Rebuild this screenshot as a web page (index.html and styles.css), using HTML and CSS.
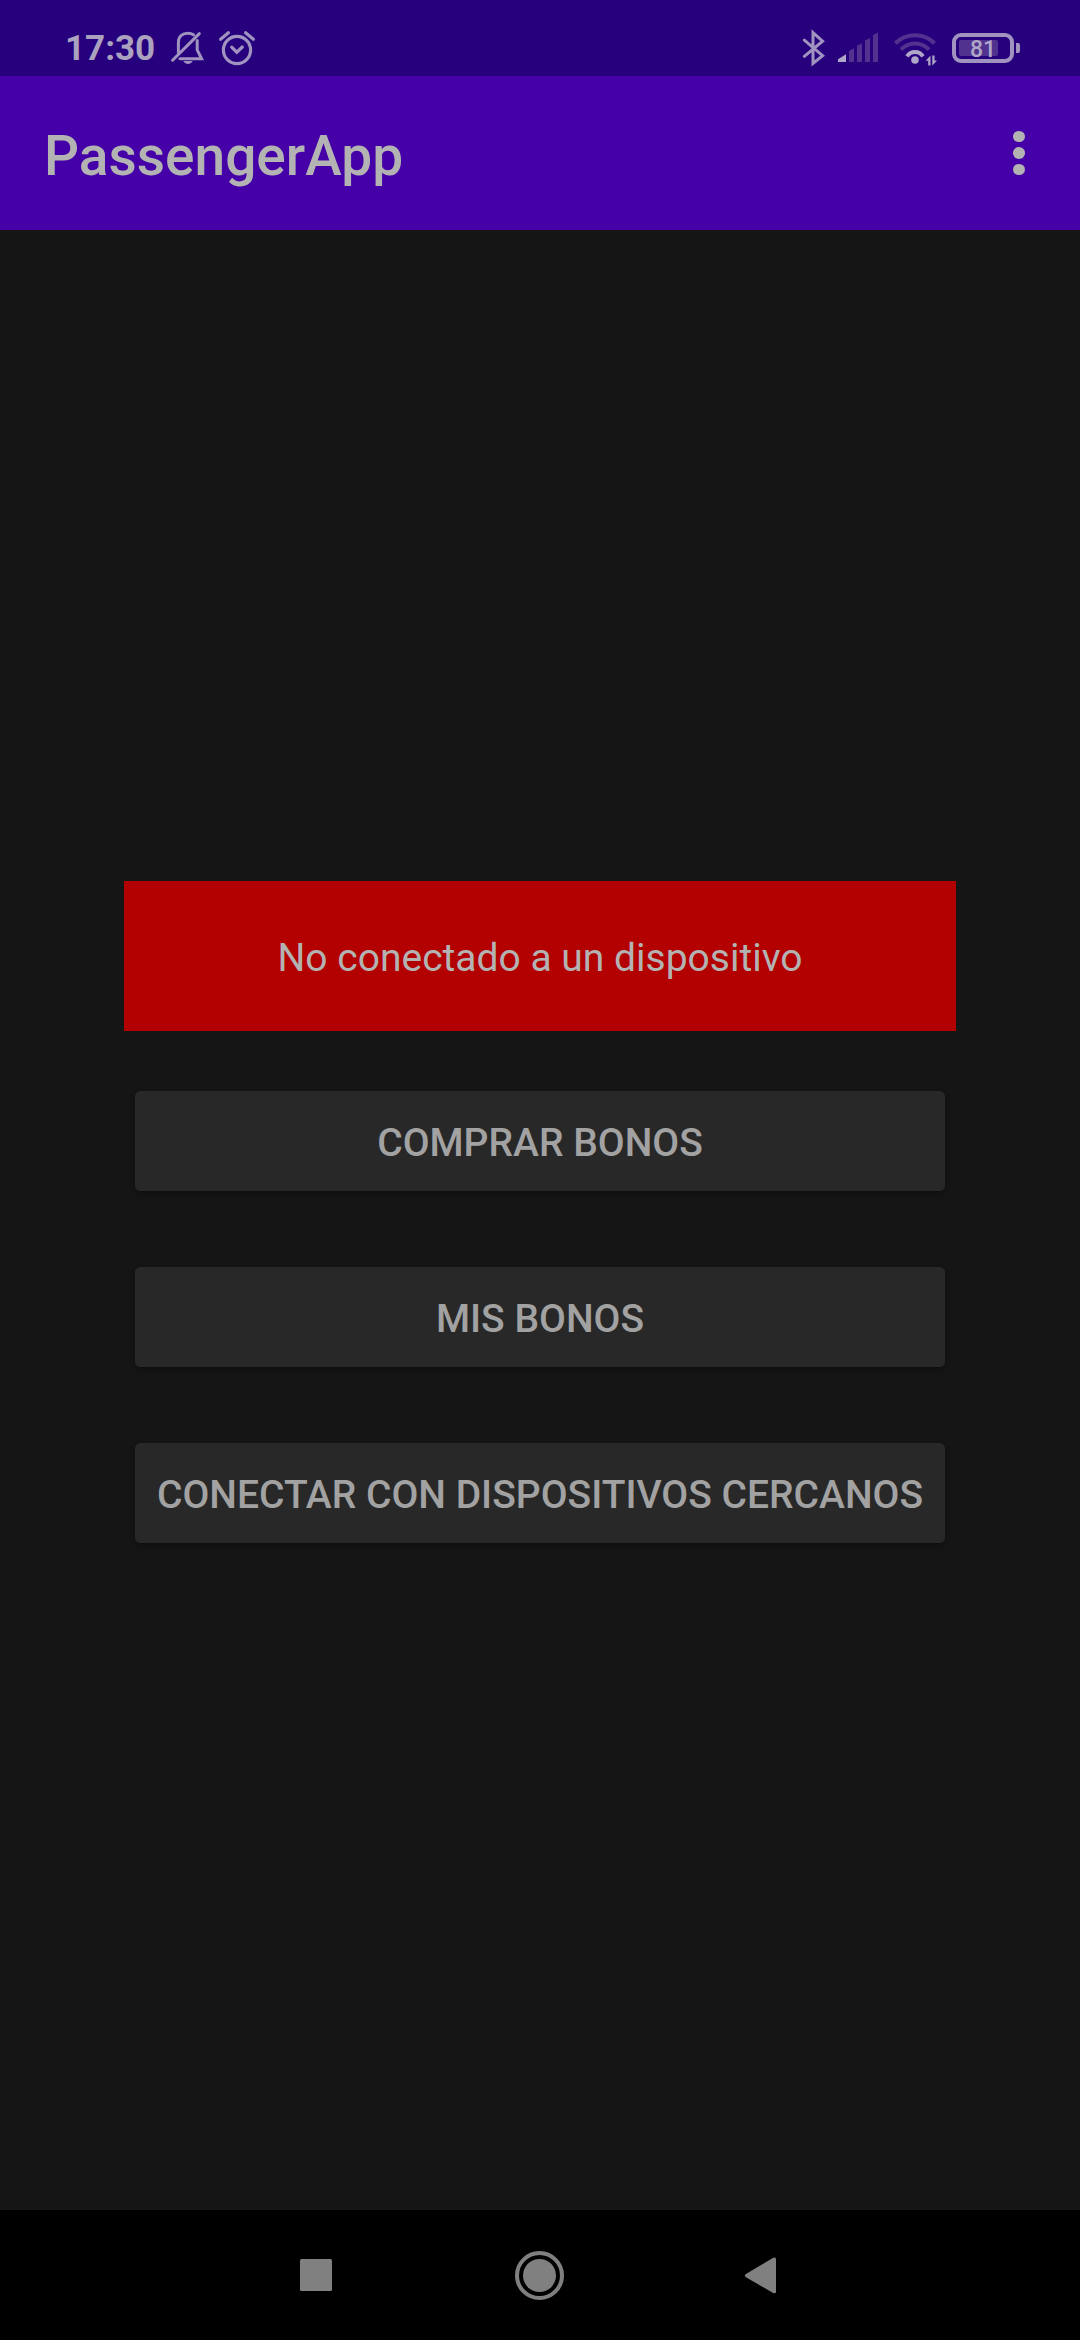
FILE: index.html
```html
<!DOCTYPE html>
<html lang="es">
<head>
<meta charset="utf-8">
<title>PassengerApp</title>
<link rel="stylesheet" href="styles.css">
</head>
<body>
<header class="status-bar">
  <div class="status-group">
    <span class="clock">17:30</span>
    <svg class="icon bell" width="36" height="40" viewBox="169 28 36 40">
      <path d="M178.4 53V42.5C178.4 36.5 182.5 33.2 187.8 33.2C190 33.2 192 33.8 193.5 34.8M197.2 40.5V50L201.6 58.7H180"/>
      <path d="M172.6 60.2L199.3 33.6"/>
      <path class="solid" d="M183.3 61H192.7C191.5 63 190 64 188 64S184.5 63 183.3 61Z"/>
    </svg>
    <svg class="icon alarm" width="40" height="40" viewBox="217 28 40 40">
      <circle cx="237" cy="50" r="13.6"/>
      <path d="M231.7 47.2L236.8 52.2L242.3 47"/>
      <path d="M220.6 39.2L228.4 32.7M245.6 32.7L253.4 39.2"/>
    </svg>
  </div>
  <div class="status-group">
    <svg class="icon bluetooth" width="26" height="40" viewBox="801 28 26 40">
      <path d="M804.3 40.2L822.6 55.6L813 63.3V32.7L822.6 41.2L804.3 56.3"/>
    </svg>
    <svg class="icon signal" width="42" height="40" viewBox="837 28 42 40">
      <path class="solid bright" d="M838 59.3L846 54.3V62H838Z"/>
      <path class="solid dim" d="M849 51L854 48.3V62H849ZM857 45.7L862 43.3V62H857ZM865 40.6L870 38V62H865ZM873 35L878 32.6V62H873Z"/>
    </svg>
    <svg class="icon wifi" width="46" height="40" viewBox="892 28 46 40">
      <path class="ring dim-line" d="M895.4 43.3A28 28 0 0 1 934.6 43.3M901 49.7A19 19 0 0 1 929 49.7"/>
      <path class="ring bright-line" d="M907 56.3A9.6 9.6 0 0 1 923 56.3"/>
      <circle class="solid bright" cx="915" cy="60" r="3.8"/>
      <path class="solid bright" d="M930.5 55.5V65.5H928.2V60.8H925.7ZM932.3 65.5V55.5H934.5V60.5H937Z"/>
    </svg>
    <div class="battery">
      <span class="battery-level">81</span>
    </div>
  </div>
</header>
<div class="app-bar">
  <h1 class="title">PassengerApp</h1>
  <button class="menu" aria-label="Más opciones"><i class="dot"></i><i class="dot"></i><i class="dot"></i></button>
</div>
<main class="content">
  <p class="notice"><span class="notice-text">No conectado a un dispositivo</span></p>
  <button class="action">COMPRAR BONOS</button>
  <button class="action">MIS BONOS</button>
  <button class="action">CONECTAR CON DISPOSITIVOS CERCANOS</button>
</main>
<nav class="nav-bar">
  <svg class="nav-icons" width="480" height="60" viewBox="298 2244 480 60">
    <rect x="300" y="2259" width="32" height="32" rx="1.5"/>
    <circle cx="539.5" cy="2275.5" r="16.5"/>
    <circle class="outline" cx="539.5" cy="2275.5" r="22.5"/>
    <path d="M745.5 2274.3L773.2 2257.8Q776 2256.8 776 2259.4V2291.4Q776 2294 773.2 2293L745.5 2276.9Q744.3 2275.6 745.5 2274.3Z"/>
  </svg>
</nav>
</body>
</html>
```

FILE: styles.css
```css
* {
  box-sizing: border-box;
}

body {
  margin: 0;
  width: 1080px;
  height: 2340px;
  display: flex;
  flex-direction: column;
  background: #151515;
  color: #b3b3b3;
  font-family: Roboto, sans-serif;
  overflow: hidden;
}

button {
  border: 0;
  margin: 0;
  padding: 0;
  font: inherit;
  color: inherit;
}

.status-bar {
  height: 76px;
  flex: none;
  padding: 28px 60px 0 65px;
  display: flex;
  align-items: flex-start;
  justify-content: space-between;
  background: #26007d;
  color: #aba2bf;
}

.status-group {
  display: flex;
  align-items: center;
  height: 40px;
}

.clock {
  width: 104px;
  padding-top: 2px;
  font-size: 35px;
  line-height: 40px;
  font-weight: 700;
}

.icon {
  display: block;
  fill: none;
  stroke: #a093c0;
  stroke-width: 3;
  stroke-linecap: round;
}

.alarm {
  margin-left: 12px;
  stroke-width: 3.2;
}

.signal {
  margin-left: 10px;
}

.wifi {
  margin-left: 13px;
}

.icon .solid {
  stroke: none;
  fill: #a093c0;
}

.icon .bright {
  fill: #b0a6c8;
}

.icon .dim {
  fill: #51338f;
}

.icon .ring {
  stroke-width: 4;
  stroke-linecap: butt;
}

.icon .dim-line {
  stroke: #51338f;
}

.icon .bright-line {
  stroke: #b0a6c8;
}

.battery {
  position: relative;
  width: 62px;
  height: 30px;
  margin: 0 6px 0 14px;
  border: 4px solid #a093c0;
  border-radius: 9px;
  padding: 3px;
}

.battery::after {
  content: "";
  position: absolute;
  left: 60px;
  top: 6px;
  width: 4px;
  height: 10px;
  border-radius: 0 2px 2px 0;
  background: #a093c0;
}

.battery-level {
  display: block;
  width: 39px;
  height: 16px;
  border-radius: 2px;
  background: #51338f;
  color: #b0a6c8;
  font-size: 23px;
  line-height: 19px;
  font-weight: 500;
  text-indent: 11px;
}

.app-bar {
  height: 154px;
  flex: none;
  display: flex;
  align-items: center;
  justify-content: space-between;
  padding: 0 55px 0 44px;
  background: #4500a7;
}

.title {
  margin: 6px 0 0;
  font-size: 55px;
  line-height: 64px;
  font-weight: 500;
}

.menu {
  width: 12px;
  display: flex;
  flex-direction: column;
  gap: 5px;
  background: none;
}

.dot {
  height: 11.5px;
  border-radius: 50%;
  background: #b3b3b3;
}

.content {
  flex: 1;
  display: flex;
  flex-direction: column;
  align-items: center;
  padding-top: 651px;
  gap: 76px;
}

.notice {
  width: 832px;
  height: 150px;
  margin: 0 0 -16px;
  padding-top: 3px;
  display: flex;
  align-items: center;
  justify-content: center;
  background: #b30000;
}

.notice-text {
  font-size: 39px;
  line-height: 46px;
}

.action {
  width: 810px;
  height: 100px;
  padding-top: 3px;
  border-radius: 5.5px;
  background: #282828;
  color: #a2a2a2;
  font-size: 39px;
  font-weight: 500;
  white-space: nowrap;
  box-shadow: 0 3px 5px rgba(0, 0, 0, 0.25);
}

.nav-bar {
  height: 130px;
  flex: none;
  display: flex;
  padding: 34px 0 0 298px;
  background: #000;
}

.nav-icons {
  fill: #808080;
}

.nav-icons .outline {
  fill: none;
  stroke: #808080;
  stroke-width: 4;
}
```
